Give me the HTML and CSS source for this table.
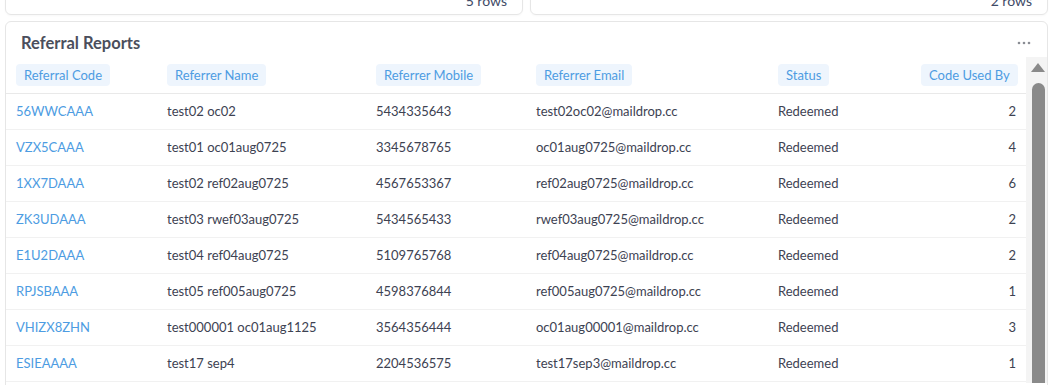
FILE: index.html
```html
<!DOCTYPE html>
<html lang="en">
<head>
<meta charset="utf-8">
<title>Referral Reports</title>
<link rel="stylesheet" href="styles.css">
</head>
<body>
<div class="page">
  <div class="top-row">
    <div class="mini-card"><span class="rows-count">5 rows</span></div>
    <div class="mini-card"><span class="rows-count">2 rows</span></div>
  </div>

  <section class="card">
    <header class="card-head">
      <h2 class="card-title">Referral Reports</h2>
      <button class="more" aria-label="More options">
        <svg width="14" height="4" viewBox="0 0 14 4"><circle cx="2" cy="2" r="1.3"/><circle cx="7" cy="2" r="1.3"/><circle cx="12" cy="2" r="1.3"/></svg>
      </button>
    </header>

    <div class="scroll-area">
      <div class="table">
        <div class="row head">
          <div class="cell"><span class="chip">Referral Code</span></div>
          <div class="cell"><span class="chip">Referrer Name</span></div>
          <div class="cell"><span class="chip">Referrer Mobile</span></div>
          <div class="cell"><span class="chip">Referrer Email</span></div>
          <div class="cell"><span class="chip">Status</span></div>
          <div class="cell num"><span class="chip">Code Used By</span></div>
        </div>

        <div class="row">
          <div class="cell code">56WWCAAA</div><div class="cell">test02 oc02</div><div class="cell">5434335643</div><div class="cell">test02oc02@maildrop.cc</div><div class="cell">Redeemed</div><div class="cell num">2</div>
        </div>
        <div class="row">
          <div class="cell code">VZX5CAAA</div><div class="cell">test01 oc01aug0725</div><div class="cell">3345678765</div><div class="cell">oc01aug0725@maildrop.cc</div><div class="cell">Redeemed</div><div class="cell num">4</div>
        </div>
        <div class="row">
          <div class="cell code">1XX7DAAA</div><div class="cell">test02 ref02aug0725</div><div class="cell">4567653367</div><div class="cell">ref02aug0725@maildrop.cc</div><div class="cell">Redeemed</div><div class="cell num">6</div>
        </div>
        <div class="row">
          <div class="cell code">ZK3UDAAA</div><div class="cell">test03 rwef03aug0725</div><div class="cell">5434565433</div><div class="cell">rwef03aug0725@maildrop.cc</div><div class="cell">Redeemed</div><div class="cell num">2</div>
        </div>
        <div class="row">
          <div class="cell code">E1U2DAAA</div><div class="cell">test04 ref04aug0725</div><div class="cell">5109765768</div><div class="cell">ref04aug0725@maildrop.cc</div><div class="cell">Redeemed</div><div class="cell num">2</div>
        </div>
        <div class="row">
          <div class="cell code">RPJSBAAA</div><div class="cell">test05 ref005aug0725</div><div class="cell">4598376844</div><div class="cell">ref005aug0725@maildrop.cc</div><div class="cell">Redeemed</div><div class="cell num">1</div>
        </div>
        <div class="row">
          <div class="cell code">VHIZX8ZHN</div><div class="cell">test000001 oc01aug1125</div><div class="cell">3564356444</div><div class="cell">oc01aug00001@maildrop.cc</div><div class="cell">Redeemed</div><div class="cell num">3</div>
        </div>
        <div class="row">
          <div class="cell code">ESIEAAAA</div><div class="cell">test17 sep4</div><div class="cell">2204536575</div><div class="cell">test17sep3@maildrop.cc</div><div class="cell">Redeemed</div><div class="cell num">1</div>
        </div>
      </div>

      <div class="scrollbar" aria-hidden="true">
        <div class="sb-arrow"></div>
        <div class="sb-thumb"></div>
      </div>
    </div>
  </section>
</div>
</body>
</html>
```

FILE: styles.css
```css
* { box-sizing: border-box; }

html, body {
  margin: 0;
  padding: 0;
  background: #ffffff;
  overflow: hidden;
  height: 385px;
}

body {
  font-family: Lato, "Open Sans", "Liberation Sans", sans-serif;
  color: #3d4252;
}

.page {
  padding: 0 1px 0 5px;
}

.top-row {
  display: grid;
  grid-template-columns: 1fr 1fr;
  gap: 7px;
  margin-top: -16px;
}

.mini-card {
  height: 31px;
  border: 1px solid #e6e6e6;
  border-radius: 6px;
  padding: 8px 15px 0;
  display: flex;
  justify-content: flex-end;
  box-shadow: 0 1px 2px rgba(0, 0, 0, 0.03);
}

.rows-count {
  font-size: 14px;
  line-height: 16px;
  color: #3e4a66;
}

.card {
  margin-top: 6px;
  border: 1px solid #e6e6e6;
  border-radius: 6px;
  height: 400px;
  overflow: hidden;
}

.card-head {
  display: flex;
  justify-content: space-between;
  align-items: center;
  padding: 12px 15px 5px 15px;
}

.card-title {
  margin: 0;
  font-size: 16.5px;
  line-height: 18px;
  font-weight: 700;
  color: #4b4f5c;
}

.more {
  border: 0;
  background: none;
  padding: 0;
  margin-right: 1px;
  display: flex;
  fill: #8a8d94;
}

.scroll-area {
  display: flex;
}

.table {
  flex: 1;
}

.row {
  display: grid;
  grid-template-columns: 151px 209px 160px 242px 1fr 95px;
  height: 36px;
  align-items: center;
  border-bottom: 1px solid #f1f1f1;
  font-size: 13px;
  padding: 0 10px 2px;
}

.row.head {
  height: 37px;
  border-bottom: 1px solid #e9e9e9;
  padding: 0 10px 1px;
}

.cell {
  white-space: nowrap;
  line-height: 16px;
}

.cell.code {
  color: #4d9ce2;
}

.cell.num {
  text-align: right;
}

.chip {
  display: inline-block;
  height: 22px;
  line-height: 22px;
  padding: 0 8px;
  border-radius: 4px;
  background: #eef5fd;
  color: #4d9ce2;
  font-size: 13px;
}

.scrollbar {
  width: 21px;
  background: #f4f4f4;
  display: flex;
  flex-direction: column;
  align-items: flex-start;
  padding: 6px 0 0 5px;
}

.sb-arrow {
  width: 0;
  height: 0;
  border-left: 7px solid transparent;
  border-right: 7px solid transparent;
  border-bottom: 9px solid #8a8a8a;
}

.sb-thumb {
  margin-top: 11px;
  margin-left: 1px;
  width: 13px;
  flex: 1;
  min-height: 300px;
  background: #8a8a8a;
  border-radius: 7px 7px 0 0;
}
```
